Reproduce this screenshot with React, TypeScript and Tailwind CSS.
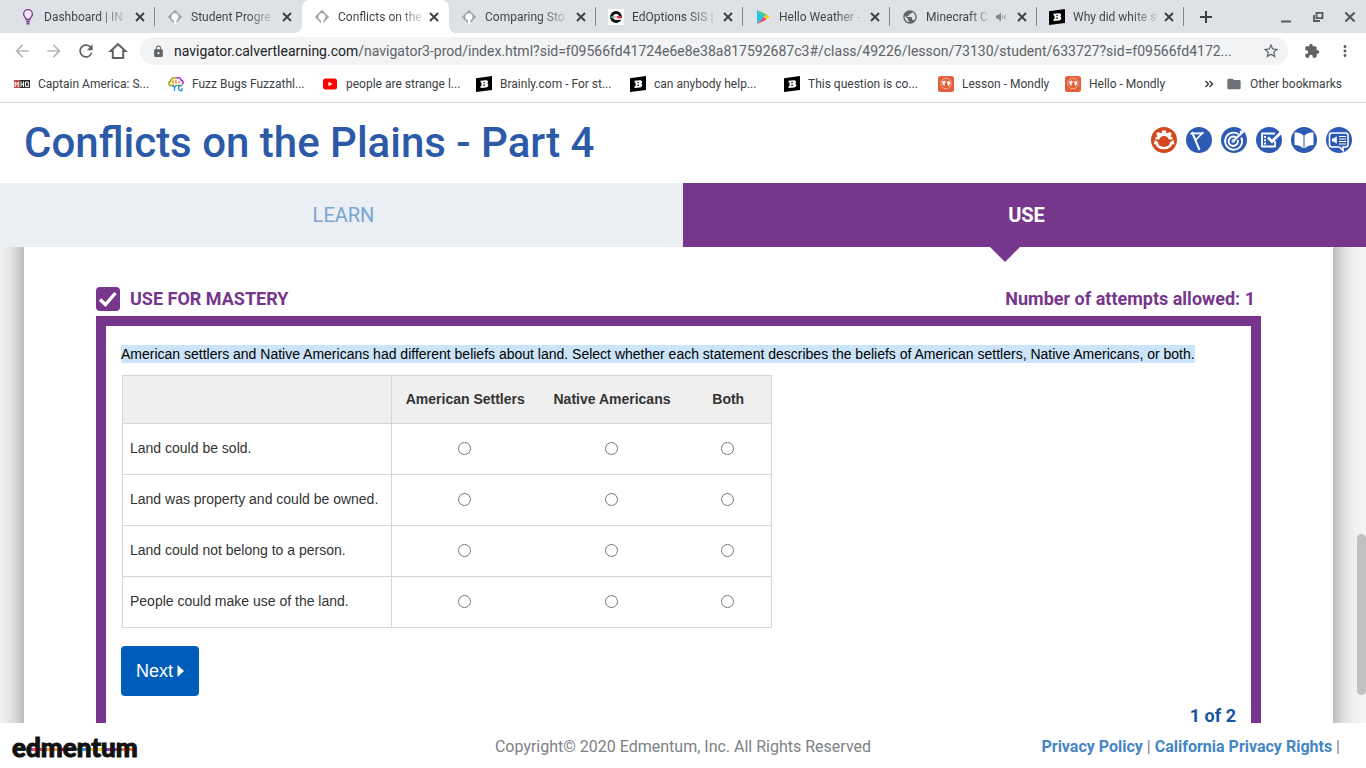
import type { ReactNode } from 'react'
import { MdArrowBack, MdArrowForward, MdExtension, MdFolder, MdLock, MdMoreVert, MdPublic, MdRefresh, MdStarBorder } from 'react-icons/md'

/* ---------- favicons ---------- */

function BulbIcon() {
  return (
    <svg width="16" height="16" viewBox="0 0 16 16" fill="none" stroke="#7b3f8c" strokeWidth="1.4">
      <path d="M6.2 10.5C6 8.6 3.6 7.8 3.6 5a4.4 4.4 0 0 1 8.8 0c0 2.8-2.4 3.6-2.6 5.5z" fill="#f1e4f6" />
      <path d="M6 12.5h4M6.5 14.6h3" strokeWidth="1.6" />
    </svg>
  )
}

function DiamondIcon() {
  return (
    <svg width="16" height="16" viewBox="0 0 16 16">
      <path d="M8 .8L15.2 8 8 15.2.8 8z" fill="#a3a5a8" />
      <path d="M8 4.2A3.6 3.6 0 0 0 5.5 10.4L7 11.6V15h2.4v-3.6l1.2-1.2A3.6 3.6 0 0 0 8 4.2z" fill="#fff" />
    </svg>
  )
}

function EdIcon() {
  return (
    <svg width="16" height="16" viewBox="0 0 16 16">
      <path d="M0 0h16v16H0z" fill="#fff" />
      <circle cx="8" cy="8" r="4.5" fill="none" stroke="#111" strokeWidth="3" />
      <path d="M9 9.2h6v1.6H9z" fill="#fff" />
      <path d="M2.5 7h3v2.2h-3z" fill="#1fa67a" />
      <path d="M5.5 7H9v2.2H5.5z" fill="#f4b8c8" />
      <path d="M9 7h4.5v2.2H9z" fill="#e0344b" />
    </svg>
  )
}

function PlayIcon() {
  return (
    <svg width="16" height="16" viewBox="0 0 16 16">
      <path d="M2 1v14l7-7z" fill="#20c4e8" />
      <path d="M2 1l7 7 2.5-2.5z" fill="#3bcf73" />
      <path d="M2 15l7-7 2.5 2.5z" fill="#ee4355" />
      <path d="M9 8l2.5-2.5L15 8l-3.5 2.5z" fill="#fbc81e" />
    </svg>
  )
}

function BrainlyIcon() {
  return (
    <svg width="16" height="16" viewBox="0 0 16 16">
      <path d="M0 2.2L16 0v14L0 16z" fill="#000" />
      <path d="M4.5 4.8l5-.5c3-.2 3.2 2.4 1.5 3.3 2 .6 1.8 3.6-1 3.9l-5.5.5v-1.7l1-.1V6.4l-1 .1z" fill="#fff" />
      <path d="M7.4 5.9l1.3-.1v1.3l-1.3.1zM7.4 8.5l1.5-.1v1.4l-1.5.1z" fill="#000" />
    </svg>
  )
}

function MhoIcon() {
  return (
    <svg width="16" height="16" viewBox="0 0 16 16" fill="none">
      <path d="M0 4h5.5v8H0z" fill="#c9493f" />
      <path d="M5.5 4H16v8H5.5z" fill="#2e2e2e" />
      <path d="M1.2 11V6l1.5 2.5L4.2 6v5M7 5.5V11M9.5 5.5V11M7 8.3h2.5M11.5 6v4.6h2.8V6z" stroke="#fff" />
    </svg>
  )
}

function FuzzIcon() {
  return (
    <svg width="16" height="16" viewBox="0 0 16 16" fill="none" strokeWidth="1.3">
      <path d="M6 9.5H2.5C0 9 .3 5.5 2.5 5.5 2.5 2 6 1 8 2.2" fill="#fff6a8" stroke="#9a9a1d" />
      <path d="M8 2.2c3-1.5 5 .2 5 1.8 2.5.2 3 3.5 1 4.5" fill="#fbe6ff" stroke="#a02bb8" />
      <path d="M5 4.5v3M8 4v4M11 5v2.5" stroke="#e8833a" />
      <path d="M4.5 9l2 2.5V15M8.5 9l-2 2.5M14 10c-4-1.5-5 4.5-1 4.5h1v-2.5" stroke="#2a8fd0" />
      <path d="M9 9.5h5" stroke="#3cab4b" />
    </svg>
  )
}

function YoutubeIcon() {
  return (
    <svg width="16" height="16" viewBox="0 0 16 16">
      <rect x="1" y="2.5" width="14" height="11" rx="2.5" fill="#f00" />
      <path d="M6.5 5.7v4.6l4-2.3z" fill="#fff" />
    </svg>
  )
}

function MondlyIcon() {
  return (
    <svg width="16" height="16" viewBox="0 0 16 16">
      <rect width="16" height="16" rx="2.5" fill="#e2603b" />
      <circle cx="8" cy="7.5" r="5.3" fill="#e2603b" stroke="#f6b9a4" strokeWidth=".8" />
      <path d="M4 5.5l3-1 .8 2-1.3 1 .3 2.5-2-1.5zM9 5.5l2.2-.5 1.3 2.5-2 2.5-1-2z" fill="#fff" />
    </svg>
  )
}

function AudioIcon() {
  return (
    <svg width="12" height="12" viewBox="0 0 12 12">
      <path d="M1 4.2h2L6 1.5v9L3 7.8H1z" fill="#85888c" />
      <path d="M7.7 4v4M10 4v4" stroke="#a5a8ac" strokeWidth="1.2" />
    </svg>
  )
}

function CrossIcon({ size = 14 }: { size?: number }) {
  return (
    <svg width={size} height={size} viewBox="0 0 14 14" fill="none" stroke="currentColor" strokeWidth="1.9">
      <path d="M3 3l8 8M11 3l-8 8" />
    </svg>
  )
}

/* ---------- browser chrome ---------- */

type Tab = { title: string; icon: ReactNode; active?: boolean; audio?: boolean }

const TABS: Tab[] = [
  { title: 'Dashboard | IN', icon: <BulbIcon /> },
  { title: 'Student Progre', icon: <DiamondIcon /> },
  { title: 'Conflicts on the', icon: <DiamondIcon />, active: true },
  { title: 'Comparing Sto', icon: <DiamondIcon /> },
  { title: 'EdOptions SIS |', icon: <EdIcon /> },
  { title: 'Hello Weather -', icon: <PlayIcon /> },
  { title: 'Minecraft C', icon: <MdPublic size={16} className="text-[#5f6368]" />, audio: true },
  { title: 'Why did white s', icon: <BrainlyIcon /> },
]

const BOOKMARKS: { label: string; icon: ReactNode; width: string }[] = [
  { label: 'Captain America: S...', icon: <MhoIcon />, width: 'w-[154px]' },
  { label: 'Fuzz Bugs Fuzzathl...', icon: <FuzzIcon />, width: 'w-[154px]' },
  { label: 'people are strange l...', icon: <YoutubeIcon />, width: 'w-[154px]' },
  { label: 'Brainly.com - For st...', icon: <BrainlyIcon />, width: 'w-[154px]' },
  { label: 'can anybody help...', icon: <BrainlyIcon />, width: 'w-[154px]' },
  { label: 'This question is co...', icon: <BrainlyIcon />, width: 'w-[154px]' },
  { label: 'Lesson - Mondly', icon: <MondlyIcon />, width: 'w-[127px]' },
  { label: 'Hello - Mondly', icon: <MondlyIcon />, width: 'w-[127px]' },
]

function TabItem({ tab, divider }: { tab: Tab; divider: boolean }) {
  return (
    <div className={tab.active ? 'relative flex h-full w-[147px] items-center rounded-t-lg bg-white pr-2 pl-3' : 'relative flex h-full w-[147px] items-center pr-2 pl-3'}>
      <span className="shrink-0">{tab.icon}</span>
      <span className="ml-2 bg-[linear-gradient(to_right,#3c4043_70%,#3c404333)] bg-clip-text whitespace-nowrap text-transparent">{tab.title}</span>
      <span className="ml-auto flex shrink-0 items-center gap-2">
        {tab.audio && <AudioIcon />}
        <button type="button" aria-label="Close tab">
          <CrossIcon />
        </button>
      </span>
      {divider && <span className="absolute top-[7px] right-0 h-[19px] w-px bg-[#85888c]" />}
      {tab.active && (
        <>
          <span className="absolute right-full bottom-0 size-2 bg-[radial-gradient(circle_at_0_0,transparent_8px,#fff_8px)]" />
          <span className="absolute bottom-0 left-full size-2 bg-[radial-gradient(circle_at_100%_0,transparent_8px,#fff_8px)]" />
        </>
      )}
    </div>
  )
}

function TabStrip() {
  return (
    <div className="flex h-[33px] shrink-0 items-center bg-[#dee1e6] pl-2 text-xs text-[#3c4043]">
      {TABS.map((tab, i) => (
        <TabItem key={tab.title} tab={tab} divider={i !== 1 && i !== 2} />
      ))}
      <button type="button" aria-label="New tab" className="ml-[14px]">
        <svg width="16" height="16" viewBox="0 0 16 16" fill="none" stroke="currentColor" strokeWidth="2">
          <path d="M8 2v12M2 8h12" />
        </svg>
      </button>
      <div className="mr-2 ml-auto flex items-center gap-4 text-[#55585c]">
        <button type="button" aria-label="Minimize">
          <svg width="16" height="16" viewBox="0 0 16 16">
            <path d="M3 11.5h10v2H3z" fill="currentColor" />
          </svg>
        </button>
        <button type="button" aria-label="Restore">
          <svg width="16" height="16" viewBox="0 0 16 16" fill="none" stroke="currentColor" strokeWidth="1.8">
            <path d="M6.5 3.8h6v5.4h-6zM4 6v6h6" />
          </svg>
        </button>
        <button type="button" aria-label="Close window">
          <CrossIcon size={16} />
        </button>
      </div>
    </div>
  )
}

function Toolbar() {
  return (
    <div className="flex h-9 shrink-0 items-center bg-white px-3 text-[#5f6368]">
      <button type="button" aria-label="Back" className="mr-3 text-[#b6b8bb]">
        <MdArrowBack size={20} />
      </button>
      <button type="button" aria-label="Forward" className="mr-3 text-[#b6b8bb]">
        <MdArrowForward size={20} />
      </button>
      <button type="button" aria-label="Reload" className="mr-3">
        <MdRefresh size={20} />
      </button>
      <button type="button" aria-label="Home" className="mr-3">
        <svg width="20" height="20" viewBox="0 0 20 20" fill="none" stroke="currentColor" strokeWidth="2">
          <path d="M4.8 10v7h10.4v-7h2.3L10 3.2 2.5 10z" />
        </svg>
      </button>
      <div className="flex h-7 min-w-0 flex-1 items-center rounded-full bg-[#f1f3f4] pr-2 pl-3">
        <MdLock size={13} className="shrink-0" />
        <p className="ml-[9px] flex-1 overflow-hidden text-sm whitespace-nowrap">
          <span className="text-[#202124]">navigator.calvertlearning.com</span>
          /navigator3-prod/index.html?sid=f09566fd41724e6e8e38a817592687c3#/class/49226/lesson/73130/student/633727?sid=f09566fd4172...
        </p>
        <button type="button" aria-label="Bookmark this page">
          <MdStarBorder size={18} />
        </button>
      </div>
      <button type="button" aria-label="Extensions" className="ml-4">
        <MdExtension size={16} />
      </button>
      <button type="button" aria-label="Menu" className="ml-4">
        <MdMoreVert size={18} />
      </button>
    </div>
  )
}

function BookmarksBar() {
  return (
    <div className="flex h-[34px] shrink-0 items-center border-b border-[#d5d7da] bg-white pr-6 pb-1 pl-[14px] text-xs text-[#3c4043]">
      {BOOKMARKS.map((b) => (
        <a key={b.label} href="#" className={`flex shrink-0 items-center gap-2 whitespace-nowrap ${b.width}`}>
          {b.icon}
          {b.label}
        </a>
      ))}
      <button type="button" aria-label="More bookmarks" className="ml-auto">
        <svg width="10" height="8" viewBox="0 0 10 8" fill="none" stroke="currentColor" strokeWidth="1.5">
          <path d="M1.5 1l3 3-3 3M5.5 1l3 3-3 3" />
        </svg>
      </button>
      <a href="#" className="ml-3 flex items-center gap-2">
        <MdFolder size={16} className="text-[#6f7276]" />
        Other bookmarks
      </a>
    </div>
  )
}

/* ---------- lesson header ---------- */

const HEADER_ICONS: { label: string; fill: string; art: ReactNode }[] = [
  {
    label: 'Refresh',
    fill: '#d2481f',
    art: (
      <>
        <path d="M4.5 12.5h3.7a5 5 0 0 1 9.6 0h3.7v-2.2l-2-.8 1.3-2.8-2-1.7-2.6 1.3-1-.5-.2-2.3h-4l-.2 2.3-1 .5L7.2 5l-2 1.7 1.3 2.8-2 .8z" fill="#fff" />
        <path d="M5 15.5c2.5 7.5 13 7.5 16 0" fill="none" stroke="#fff" strokeWidth="2.4" />
        <path d="M2.5 17.5l1.5-4.5 4 3zM18 16l4.5-3 1 4.5z" fill="#fff" />
      </>
    ),
  },
  {
    label: 'Objectives',
    fill: '#2c5ab5',
    art: (
      <g fill="none" stroke="#fff">
        <path d="M6 5l7.5 18" strokeWidth="2" />
        <path d="M4.5 7c3.5-2 7 .8 13-1.5-4 2.500-4.500 5-8 7.500" strokeWidth="1.7" />
      </g>
    ),
  },
  {
    label: 'Goals',
    fill: '#2c5ab5',
    art: (
      <g fill="none" stroke="#fff">
        <path d="M17.5 7.2A8.5 8.5 0 1 0 20.3 10.5" strokeWidth="1.9" />
        <path d="M15.2 10.6a4.7 4.7 0 1 0 1.6 2.4" strokeWidth="1.9" />
        <circle cx="12.3" cy="14" r="1.2" strokeWidth="1.2" />
        <path d="M12.5 13.8L23 4" strokeWidth="2" />
        <path d="M19.5 7.5V4.5L22 2.5" strokeWidth="1.4" />
      </g>
    ),
  },
  {
    label: 'Tasks',
    fill: '#2c5ab5',
    art: (
      <g fill="none" stroke="#fff">
        <path d="M19 14v5.5H6v-13h13" strokeWidth="1.8" />
        <path d="M8 10h2M8 13.3h2M8 16.5h2" strokeWidth="2" />
        <path d="M12 10.5l4 4L24.5 6" strokeWidth="2.8" />
      </g>
    ),
  },
  {
    label: 'Glossary',
    fill: '#2c5ab5',
    art: <path d="M3.5 5.5c3.5 0 6.5.5 9 3v13c-2.5-2.5-5.5-3.5-9-3.5zM22.5 5.5c-3.5 0-6.5.5-9 3v13c2.5-2.5 5.5-3.5 9-3.5z" fill="#fff" />,
  },
  {
    label: 'Read aloud',
    fill: '#2c5ab5',
    art: (
      <>
        <path d="M13.5 20H6a2.5 2.5 0 0 1-2.5-2.5V8.5A2.5 2.5 0 0 1 6 6h13.5A2.5 2.5 0 0 1 22 8.5v9a2.5 2.5 0 0 1-2.5 2.5H17v3.5L13.5 20" fill="none" stroke="#fff" strokeWidth="1.6" />
        <path d="M6 11.5h1.5l3.3-2.3v7.6l-3.3-2.3H6z" fill="#fff" />
        <path d="M13 9.5h7M13 12h7M13 14.5h7M13 17h7" stroke="#fff" strokeWidth="1.1" />
      </>
    ),
  },
]

function LessonHeader() {
  return (
    <header className="flex h-20 shrink-0 items-center justify-between pr-[14px] pl-6">
      <h1 className="text-[42px] leading-none font-medium text-[#2c5aa8]">Conflicts on the Plains - Part 4</h1>
      <div className="flex gap-[9px] pb-[6px]">
        {HEADER_ICONS.map((icon) => (
          <button key={icon.label} type="button" aria-label={icon.label}>
            <svg width="26" height="26" viewBox="0 0 26 26">
              <circle cx="13" cy="13" r="13" fill={icon.fill} />
              {icon.art}
            </svg>
          </button>
        ))}
      </div>
    </header>
  )
}

function LessonTabs() {
  return (
    <nav className="relative z-10 grid h-16 shrink-0 grid-cols-2 text-xl">
      <button type="button" className="bg-[#ebeff3] pl-1 text-[#77a5d6]">LEARN</button>
      <button type="button" className="relative bg-[#76368c] pl-1 font-bold text-white">
        USE
        <svg className="absolute top-full left-[45%]" width="30" height="15" viewBox="0 0 30 15">
          <path d="M0 0h30L15 15z" fill="#76368c" />
        </svg>
      </button>
    </nav>
  )
}

/* ---------- question ---------- */

const BELIEFS = ['American Settlers', 'Native Americans', 'Both']
const STATEMENTS = ['Land could be sold.', 'Land was property and could be owned.', 'Land could not belong to a person.', 'People could make use of the land.']

function QuestionTable() {
  return (
    <table className="mt-[11px] ml-px w-[650px] table-fixed border-collapse border border-[#d6d6d6] text-sm text-[#333]">
      <colgroup>
        <col className="w-[269px]" />
        <col className="w-[147px]" />
        <col className="w-[147px]" />
        <col />
      </colgroup>
      <thead>
        <tr className="h-12 bg-[#efefef]">
          <td className="border-r border-[#d6d6d6]" />
          {BELIEFS.map((b) => (
            <th key={b} scope="col" className="pb-[2px] font-bold whitespace-nowrap">{b}</th>
          ))}
        </tr>
      </thead>
      <tbody>
        {STATEMENTS.map((s) => (
          <tr key={s} className="h-[51px] border-t border-[#d6d6d6]">
            <th scope="row" className="border-r border-[#d6d6d6] pb-[2px] pl-[7px] text-left font-normal whitespace-nowrap">{s}</th>
            {BELIEFS.map((b) => (
              <td key={b} className="pr-[2px] pb-[2px]">
                <input type="radio" name={s} aria-label={`${s} ${b}`} className="mx-auto block size-[13px]" />
              </td>
            ))}
          </tr>
        ))}
      </tbody>
    </table>
  )
}

function Lesson() {
  return (
    <main className="relative flex min-h-0 flex-1 overflow-hidden bg-[#f3f3f3] pr-[33px] pl-6">
      {/* runs past both edges so the side shadows keep their full strength */}
      <section className="-my-6 flex flex-1 flex-col bg-white px-[72px] pt-[62px] shadow-[0_0_24px_rgba(0,0,0,0.45)]">
        <div className="flex h-[31px] shrink-0 items-start justify-between pr-[6px] text-lg leading-[27px] font-bold text-[#76368c]">
          <h2 className="flex items-center gap-[10px]">
            <svg width="24" height="24" viewBox="0 0 24 24">
              <rect width="24" height="24" rx="4" fill="#76368c" />
              <path d="M4 12.5l5.5 5L19.5 6" fill="none" stroke="#fff" strokeWidth="3.4" />
            </svg>
            USE FOR MASTERY
          </h2>
          <p>Number of attempts allowed: 1</p>
        </div>
        <div className="flex flex-1 flex-col border-x-10 border-t-10 border-[#76368c] px-[15px] pt-[19px] font-['Liberation_Sans',sans-serif]">
          <p className="text-sm leading-[19px] text-black">
            <span className="bg-[#cce4f9] py-px">
              American settlers and Native Americans had different beliefs about land. Select whether each statement describes the beliefs of American settlers, Native Americans, or both.
            </span>
          </p>
          <QuestionTable />
          <button type="button" className="mt-[18px] flex h-[50px] w-[78px] shrink-0 items-center justify-center gap-1 rounded-sm bg-[#005cb9] text-lg text-white">
            Next
            <svg width="7" height="12" viewBox="0 0 7 12">
              <path d="M.5 0L7 6 .5 12z" fill="currentColor" />
            </svg>
          </button>
          <p className="mt-3 text-right font-['Roboto',sans-serif] text-lg leading-4 font-bold text-[#14559e]">1 of 2</p>
        </div>
      </section>
      <span className="absolute top-[287px] right-0 h-[161px] w-[9px] rounded-full bg-[#c1c1c1]" />
    </main>
  )
}

function Logo() {
  return (
    <a href="#" className="relative justify-self-start font-['Lato',sans-serif] text-[26px] leading-[26px] font-black text-[#111]">
      <span className="absolute inset-x-1 top-[14px] h-[3px] bg-[linear-gradient(to_right,#3db4e6_0_12%,#e8457a_12%_25%,#f3a03c_25%_38%,#e6187a_38%_50%,#3aa0dc_50%_62%,#f3d03c_62%_74%,#8e44a8_74%_86%,#f0782c_86%)]" />
      <span className="relative [-webkit-text-stroke:1px_#111]">edmentum</span>
    </a>
  )
}

function Footer() {
  return (
    <footer className="grid h-[45px] shrink-0 grid-cols-3 items-center bg-white px-3 pt-[2px] text-base text-[#7d8186]">
      <Logo />
      <p className="text-center whitespace-nowrap">Copyright© 2020 Edmentum, Inc. All Rights Reserved</p>
      <p className="pr-[14px] text-right whitespace-nowrap">
        <a href="#" className="font-bold text-[#4486c6]">Privacy Policy</a> | <a href="#" className="font-bold text-[#4486c6]">California Privacy Rights</a> |
      </p>
    </footer>
  )
}

export default function App() {
  return (
    <div className="flex h-screen flex-col overflow-hidden bg-white font-['Roboto',sans-serif]">
      <TabStrip />
      <Toolbar />
      <BookmarksBar />
      <LessonHeader />
      <LessonTabs />
      <Lesson />
      <Footer />
    </div>
  )
}
